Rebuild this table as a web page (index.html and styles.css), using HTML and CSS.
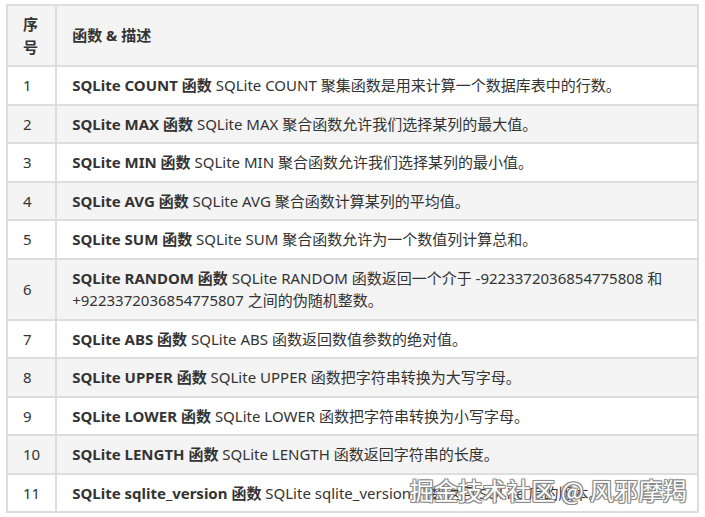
FILE: index.html
```html
<!DOCTYPE html>
<html lang="zh">
<head>
<meta charset="utf-8">
<title>SQLite 函数</title>
<link rel="stylesheet" href="styles.css">
</head>
<body>
<div class="wrap">
<table class="fn-table">
  <thead>
    <tr><th class="num">序号</th><th>函数 &amp; 描述</th></tr>
  </thead>
  <tbody>
    <tr><td class="num">1</td><td><b>SQLite COUNT 函数</b> SQLite COUNT 聚集函数是用来计算一个数据库表中的行数。</td></tr>
    <tr><td class="num">2</td><td><b>SQLite MAX 函数</b> SQLite MAX 聚合函数允许我们选择某列的最大值。</td></tr>
    <tr><td class="num">3</td><td><b>SQLite MIN 函数</b> SQLite MIN 聚合函数允许我们选择某列的最小值。</td></tr>
    <tr><td class="num">4</td><td><b>SQLite AVG 函数</b> SQLite AVG 聚合函数计算某列的平均值。</td></tr>
    <tr><td class="num">5</td><td><b>SQLite SUM 函数</b> SQLite SUM 聚合函数允许为一个数值列计算总和。</td></tr>
    <tr><td class="num">6</td><td><b>SQLite RANDOM 函数</b> SQLite RANDOM 函数返回一个介于 -9223372036854775808 和 +9223372036854775807 之间的伪随机整数。</td></tr>
    <tr><td class="num">7</td><td><b>SQLite ABS 函数</b> SQLite ABS 函数返回数值参数的绝对值。</td></tr>
    <tr><td class="num">8</td><td><b>SQLite UPPER 函数</b> SQLite UPPER 函数把字符串转换为大写字母。</td></tr>
    <tr><td class="num">9</td><td><b>SQLite LOWER 函数</b> SQLite LOWER 函数把字符串转换为小写字母。</td></tr>
    <tr><td class="num">10</td><td><b>SQLite LENGTH 函数</b> SQLite LENGTH 函数返回字符串的长度。</td></tr>
    <tr><td class="num">11</td><td><b>SQLite sqlite_version 函数</b> SQLite sqlite_version 函数返回 SQLite 库的版本。</td></tr>
  </tbody>
</table>
<div class="watermark">掘金技术社区 @ 风邪摩羯</div>
</div>
</body>
</html>
```

FILE: styles.css
```css
html, body {
  margin: 0;
  padding: 0;
  background: #ffffff;
}
body {
  padding: 4px 6px 0 6px;
  font-family: "Noto Sans", "Noto Sans CJK SC", sans-serif;
  font-size: 15px;
  color: #333333;
}
.wrap {
  position: relative;
}
.fn-table {
  width: 100%;
  border-collapse: collapse;
  border: 2px solid #dddddd;
}
.fn-table th,
.fn-table td {
  border: 2px solid #dddddd;
  padding: 7px 15px;
  line-height: 22.5px;
  text-align: left;
  vertical-align: middle;
}
.fn-table th {
  font-weight: bold;
  background: #f4f4f4;
}
.fn-table th.num,
.fn-table td.num {
  width: 17px;
}
.fn-table tbody tr:nth-child(even) td {
  background: #f4f4f4;
}
.fn-table b {
  font-weight: bold;
}
.watermark {
  position: absolute;
  right: 12px;
  bottom: 6px;
  font-family: "Noto Sans CJK SC", sans-serif;
  font-size: 24px;
  color: #ffffff;
  letter-spacing: 0.3px;
  text-shadow: -1px -1px 0 #8a8a8a, 1px -1px 0 #8a8a8a, -1px 1px 0 #8a8a8a, 1px 1px 0 #8a8a8a, 0 0 2px #777;
}
```
